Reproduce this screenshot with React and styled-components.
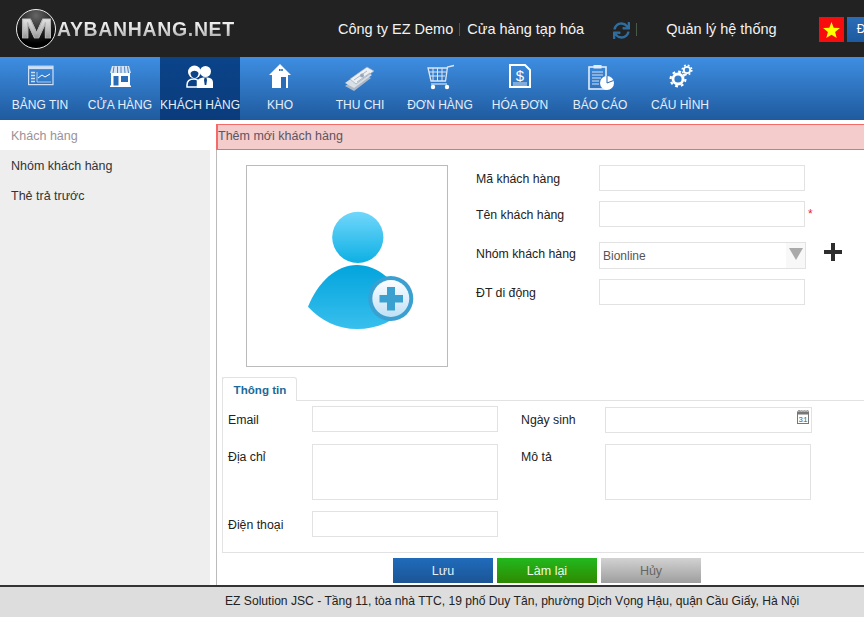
import React from 'react';
import styled, { createGlobalStyle } from 'styled-components';
import { FaSync } from 'react-icons/fa';

const Global = createGlobalStyle`
  html, body { margin: 0; padding: 0; overflow: hidden; background: #fff; }
  * { box-sizing: border-box; }
  body { font-family: "Liberation Sans", Arial, sans-serif; }
`;

const Page = styled.div`
  width: 864px; height: 617px; overflow: hidden;
  display: flex; flex-direction: column;
`;

const TopBar = styled.header`
  height: 57px; background: #222; flex: none;
  display: flex; align-items: center; color: #fff; white-space: nowrap;
`;
const Logo = styled.div`
  display: flex; align-items: center; margin-left: 16px; width: 322px; flex: none;
`;
const LogoBall = styled.div`
  width: 40px; height: 40px; border-radius: 50%; flex: none;
  border: 1.5px solid #eee;
  background: radial-gradient(circle at 50% 15%, #666 0%, #2a2a2a 40%, #000 75%);
  display: flex; align-items: center; justify-content: center; overflow: visible;
`;
const LogoM = styled.span`
  font-weight: bold; font-size: 28px; line-height: 30px; margin-left: 2px;
  transform: scaleX(1.42);
  -webkit-text-stroke: 0.7px #b4b4b4;
  background: linear-gradient(180deg, #f4f4f4 0%, #bbb 55%, #777 100%);
  -webkit-background-clip: text; background-clip: text; color: transparent;
`;
const LogoText = styled.span`
  font-weight: bold; font-size: 19.5px; letter-spacing: 0.65px; line-height: 24px; margin-left: 1px;
  background: linear-gradient(180deg, #fff 0%, #ddd 50%, #999 100%);
  -webkit-background-clip: text; background-clip: text; color: transparent;
`;
const TopLink = styled.span`
  font-size: 14.5px; color: #f2f2f2; margin-top: 1px;
  margin-left: ${p => p.$ml || 0}px;
`;
const TopDivider = styled.span`
  width: 1px; height: 13px; background: #4a5a4a; flex: none; margin-top: 1px;
  margin-left: ${p => p.$ml}px;
`;
const SyncIcon = styled(FaSync)`
  width: 17px; height: 19px; color: #2e6d9e; margin-left: 29px; margin-top: 4px; flex: none;
`;
const Flag = styled.div`
  width: 25px; height: 25px; background: #f70d0d; margin-left: 42px; flex: none;
  display: flex; align-items: center; justify-content: center; margin-top: 2px;
`;
const LangButton = styled.div`
  width: 60px; height: 25px; margin-left: 3px; flex: none; margin-top: 2px;
  background: linear-gradient(180deg, #2a6db8, #1d5a9f);
  font-size: 12px; line-height: 25px; padding-left: 10px; color: #fff;
`;

const Nav = styled.nav`
  height: 63px; flex: none; display: flex;
  background: linear-gradient(180deg, #3e8ee2 0%, #1f5a9e 100%);
`;
const NavItem = styled.div`
  width: 80px; flex: none; display: flex; flex-direction: column; align-items: center;
  padding-top: 5px; color: #e6eefa; font-size: 12px; white-space: nowrap;
  background: ${p => p.$active ? 'linear-gradient(180deg,#0b4389,#0a3c7c)' : 'transparent'};
  svg { display: block; width: 40px; height: 30px; flex: none; }
`;
const NavLabel = styled.span`
  line-height: 16px; margin-top: 5px;
`;

const Main = styled.main`
  flex: 1; display: flex; min-height: 0;
`;
const Sidebar = styled.aside`
  width: 210px; flex: none; background: #eee;
`;
const SideItem = styled.div`
  height: 30px; padding-left: 11px; font-size: 12.5px; line-height: 33px;
  color: ${p => p.$active ? '#9a929a' : '#333'};
  background: ${p => p.$active ? '#fff' : 'transparent'};
`;
const Content = styled.section`
  flex: none; width: 648px; margin-left: 6px; border-left: 1px solid #bbb; margin-top: 4px;
  display: flex; flex-direction: column;
`;
const TitleBar = styled.div`
  height: 26px; margin-left: -1px; background: #f4cccc; border: 1px solid #f26a6a; border-width: 1px 0 1px 2px;
  font-size: 12.5px; line-height: 23px; color: #5d5560; padding-left: 0; flex: none;
`;
const TopSection = styled.div`
  display: flex; padding: 15px 0 0 29px; flex: none;
`;
const Avatar = styled.div`
  width: 202px; height: 202px; border: 1px solid #bbb; flex: none;
  svg { display: block; }
`;
const Fields = styled.div`
  margin-left: 28px; display: grid; grid-template-columns: 123px 206px auto; align-content: start;
  grid-template-rows: 26px 26px 32px 26px; row-gap: 10px;
`;
const Label = styled.label`
  font-size: 12.3px; color: #222; line-height: 28px; height: 28px; white-space: nowrap;
  margin-left: ${p => p.$ml || 0}px;
  margin-top: ${p => p.$mt || 0}px;
`;
const SelectLabel = styled(Label)`
  align-self: end; margin-bottom: 1px;
`;
const TextBox = styled.input`
  display: block; width: 100%; height: 26px; border: 1px solid #e2e2e2; background: #fff; outline: none; padding: 0 4px;
`;
const Area = styled.div`
  width: ${p => p.$w || 186}px; height: 56px; border: 1px solid #e2e2e2; background: #fff;
  margin-left: ${p => p.$ml || 0}px;
`;
const Star = styled.span`
  color: #e8204a; font-size: 12px; line-height: 26px; margin-left: 3px;
`;
const Select = styled.div`
  width: 207px; height: 27px; border: 1px solid #e2e2e2; font-size: 12px; color: #555;
  display: flex; align-items: center; justify-content: space-between; padding-left: 3px;
  line-height: 26px; align-self: end;
`;
const SelectArrow = styled.span`
  width: 19px; height: 25px; background: #f8f8f8; display: flex; align-items: center; justify-content: center;
  &::after { content: ''; width: 0; height: 0; border-left: 7px solid transparent; border-right: 7px solid transparent; border-top: 12px solid #aaa; margin-top: -3px; }
`;
const AddButton = styled.svg`
  width: 18px; height: 18px; margin: 0 0 8px 19px; display: block; align-self: end;
`;

const TabPanel = styled.div`
  margin: 10px 0 0 5px; flex: none; height: 176px;
  border-left: 1px solid #e2e2e2; border-bottom: 1px solid #e2e2e2;
  display: flex; flex-direction: column;
`;
const TabRow = styled.div`
  height: 24px; flex: none; border-bottom: 1px solid #e2e2e2; margin-left: -1px;
`;
const Tab = styled.div`
  width: 75px; height: 24px; background: #fff; border: 1px solid #e2e2e2; border-bottom: none;
  border-radius: 3px 3px 0 0; font-size: 11.6px; font-weight: bold; color: #1a6a9a;
  text-align: center; line-height: 23px; padding-left: 1px;
`;
const TabGrid = styled.div`
  display: grid; padding: 5px 0 0 5px;
  grid-template-columns: 84px 186px 107px 206px;
  grid-template-rows: 38px 67px 26px;
`;
const DatePicker = styled.div`
  position: relative; margin-top: 1px; width: 207px; height: 26px;
`;
const CalIcon = styled.svg`
  position: absolute; right: 3px; top: 2px; width: 12px; height: 15px;
`;

const Actions = styled.div`
  display: flex; gap: 4px; padding: 5px 0 0 176px;
`;
const Btn = styled.button`
  width: 100px; height: 25px; border: none; padding: 0; font: 12.5px "Liberation Sans", Arial, sans-serif;
  color: ${p => p.$text};
  background: linear-gradient(180deg, ${p => p.$from}, ${p => p.$to});
`;

const Footer = styled.footer`
  height: 32px; flex: none; background: #ddd; border-top: 2px solid #333;
  font-size: 12.12px; color: #222; line-height: 29px; padding-left: 225px; white-space: nowrap;
`;

const W = '#fff';
const B = '#2b6cb8';

const icons = [
  <svg viewBox="0 0 40 30" key="1">
    <rect x="8.6" y="4.2" width="24.4" height="18.4" fill="none" stroke="#cfe0f5" strokeWidth="1.2" />
    <rect x="9" y="4.5" width="24" height="2.6" fill="#cfe0f5" />
    <path d="M11 10.5h4M11 13.5h4M11 16.5h4M11 19.5h4" stroke="#cfe0f5" strokeWidth="1.4" />
    <path d="M17 10v10h14" fill="none" stroke="#cfe0f5" strokeWidth=".8" />
    <path d="M18 16l4-3 3 2 5-3" fill="none" stroke="#fff" strokeWidth="1" />
  </svg>,
  <svg viewBox="0 0 40 30" key="2">
    <path d="M12 4h17l2 7H10z" fill="#d7e4f5" />
    <path d="M14 4.5l-1 6.5M17.500 4.500v6.500M21 4.500v6.500M24.500 4.500l.5 6.500M27.500 4.500l1 6.500" stroke="#4a83c2" strokeWidth="1" />
    <rect x="11" y="11" width="19" height="14" fill={W} />
    <rect x="13.500" y="14" width="5" height="11" fill={B} />
    <rect x="21" y="14" width="7" height="6" fill={B} />
    <rect x="10" y="23.500" width="21" height="1.500" fill={W} />
  </svg>,
  <svg viewBox="0 0 40 30" key="3">
    <circle cx="14.500" cy="10" r="6.500" fill={W} />
    <path d="M10.500 11c2-3 6-3 8 0 0 3-2 5-4 5s-4-2-4-5z" fill="#0c4488" />
    <path d="M7 25v-2c0-4 3-6 7-6 1.500 0 2.500.300 3.500 1v7z" fill="none" stroke={W} strokeWidth="1.500" />
    <circle cx="25.500" cy="9.500" r="5.500" fill={W} />
    <path d="M17 26v-5c0-4 3-5.500 8.500-5.500S33 17 33 21v5z" fill={W} />
    <path d="M24.500 16h2l.5 2-.7 5h-1.600l-.7-5z" fill="#0c4488" />
  </svg>,
  <svg viewBox="0 0 40 30" key="4">
    <path d="M20 2L31 13h-3v13H12V13H9z" fill={W} />
    <path d="M19 7h1.600v2H19zM21.200 7h1.600v2h-1.600z" fill={B} />
    <rect x="21" y="15" width="5" height="11" fill={B} />
  </svg>,
  <svg viewBox="0 0 40 30" key="5">
    <path d="M5 24L23 12l8 4-17 13z" fill="#aeb9c7" />
    <path d="M5 21L23 8l9 5-18 13z" fill="#d9dfe6" />
    <path d="M10 17L27 5l7 4-18 13z" fill="#eef1f4" stroke="#9aa8b8" strokeWidth=".7" />
    <path d="M14 18l13-9M17 20l13-9" stroke="#9aa8b8" strokeWidth=".8" />
    <circle cx="22" cy="13.500" r="2" fill="#9aa8b8" />
  </svg>,
  <svg viewBox="0 0 40 30" key="6">
    <path d="M34 3.500l-6.500 1.500-2 14H11L8 6h19" fill="none" stroke="#d9e6f6" strokeWidth="1.300" />
    <path d="M9 10h17M10 14h15M13 6v13M17.500 6v13M22 6v13" stroke="#d9e6f6" strokeWidth="1" />
    <path d="M11 22h16" stroke="#d9e6f6" strokeWidth="1.200" />
    <circle cx="13" cy="25" r="2.200" fill={W} />
    <circle cx="27" cy="25" r="2.200" fill={W} />
  </svg>,
  <svg viewBox="0 0 40 30" key="7">
    <path d="M10 3h15l5 5v17H10z" fill="none" stroke={W} strokeWidth="2" />
    <text x="20" y="18.500" textAnchor="middle" fontFamily="Liberation Sans" fontSize="15" fill={W}>$</text>
    <path d="M13 21h14M13 23h14" stroke="#cfe0f5" strokeWidth="1" />
  </svg>,
  <svg viewBox="0 0 40 30" key="8">
    <rect x="9" y="5" width="17" height="22" fill="none" stroke="#e3edf9" strokeWidth="1.600" />
    <rect x="13.500" y="3" width="8" height="3.500" fill="#e3edf9" />
    <path d="M12 10h11M12 13h11M12 16h9M12 19h7M12 22h7" stroke="#d5e3f4" strokeWidth="1" />
    <circle cx="27" cy="21" r="7" fill={W} />
    <path d="M27 21V14M27 21l6.500 -2.500" stroke="#2b66ad" strokeWidth="1" />
  </svg>,
  <svg viewBox="0 0 40 30" key="9">
    <circle cx="18" cy="17" r="5" fill="none" stroke={W} strokeWidth="2.800" />
    <circle cx="18" cy="17" r="7.400" fill="none" stroke={W} strokeWidth="2.200" strokeDasharray="2.800 3" />
    <circle cx="27" cy="8" r="3.200" fill="none" stroke={W} strokeWidth="1.800" />
    <circle cx="27" cy="8" r="4.800" fill="none" stroke={W} strokeWidth="1.500" strokeDasharray="1.800 2" />
  </svg>,
];
const navLabels = ['BẢNG TIN', 'CỬA HÀNG', 'KHÁCH HÀNG', 'KHO', 'THU CHI', 'ĐƠN HÀNG', 'HÓA ĐƠN', 'BÁO CÁO', 'CẤU HÌNH'];

const AvatarArt = () => (
  <svg width="200" height="200" viewBox="247 166 200 200">
    <defs>
      <linearGradient id="head" x1="0" y1="0" x2="0" y2="1"><stop offset="0" stopColor="#72d7fb" /><stop offset="1" stopColor="#0db0e4" /></linearGradient>
      <linearGradient id="body" x1="0" y1="0" x2="0" y2="1"><stop offset="0" stopColor="#02a4dd" /><stop offset="1" stopColor="#38bfed" /></linearGradient>
      <linearGradient id="disc" x1="0" y1="0" x2="0" y2="1"><stop offset="0" stopColor="#fdfeff" /><stop offset="1" stopColor="#bfe0f5" /></linearGradient>
    </defs>
    <circle cx="357.800" cy="237.300" r="25.600" fill="url(#head)" />
    <path d="M308 306.700C318 282 336 265 357 265c20 0 38 15 52 41-14 15-32 23-52 23-19 0-36-8-49-22.300z" fill="url(#body)" />
    <circle cx="390.800" cy="298.500" r="22.500" fill="#3aa0d2" />
    <circle cx="390.800" cy="298.500" r="18.500" fill="url(#disc)" />
    <path d="M387 287h8v8h8v7.500h-8v8h-8v-8h-7.500V295h7.500z" fill="#3aa0d0" />
  </svg>
);

export default function App() {
  return (
    <Page>
      <Global />
      <TopBar>
        <Logo>
          <LogoBall><LogoM>M</LogoM></LogoBall>
          <LogoText>AYBANHANG.NET</LogoText>
        </Logo>
        <TopLink>Công ty EZ Demo</TopLink>
        <TopDivider $ml={6} />
        <TopLink $ml={7}>Cửa hàng tạp hóa</TopLink>
        <SyncIcon />
        <TopDivider $ml={6} />
        <TopLink $ml={29}>Quản lý hệ thống</TopLink>
        <Flag>
          <svg width="17" height="16" viewBox="0 0 20 19"><path d="M10 0l2.600 6.800 7.400.400-5.700 4.600 1.900 7.200L10 15l-6.200 4 1.900-7.200L0 7.200l7.400-.400z" fill="#ff0" /></svg>
        </Flag>
        <LangButton>Đ</LangButton>
      </TopBar>
      <Nav>
        {navLabels.map((t, i) => (
          <NavItem key={t} $active={i === 2}>
            {icons[i]}
            <NavLabel>{t}</NavLabel>
          </NavItem>
        ))}
      </Nav>
      <Main>
        <Sidebar>
          <SideItem $active>Khách hàng</SideItem>
          <SideItem>Nhóm khách hàng</SideItem>
          <SideItem>Thẻ trả trước</SideItem>
        </Sidebar>
        <Content>
          <TitleBar>Thêm mới khách hàng</TitleBar>
          <TopSection>
            <Avatar><AvatarArt /></Avatar>
            <Fields>
              <Label>Mã khách hàng</Label><TextBox /><span />
              <Label>Tên khách hàng</Label><TextBox /><Star>*</Star>
              <SelectLabel>Nhóm khách hàng</SelectLabel>
              <Select>Bionline<SelectArrow /></Select>
              <AddButton viewBox="0 0 18 18"><path d="M7 0h4v7h7v4h-7v7H7v-7H0V7h7z" fill="#2d2d2d" /></AddButton>
              <Label>ĐT di động</Label><TextBox /><span />
            </Fields>
          </TopSection>
          <TabPanel>
            <TabRow><Tab>Thông tin</Tab></TabRow>
            <TabGrid>
              <Label>Email</Label><TextBox />
              <Label $ml={23}>Ngày sinh</Label>
              <DatePicker>
                <TextBox />
                <CalIcon viewBox="0 0 12 15">
                  <path d="M1 2.500l1-1.500 1 1.500 1.500-1.500 1.500 1.500 1.500-1.500 1.500 1.500 1.500-1.500 1 1.500" fill="none" stroke="#777" strokeWidth=".8" />
                  <rect x=".5" y="3" width="11" height="11.500" fill="#fff" stroke="#777" />
                  <rect x=".5" y="3" width="11" height="2.500" fill="#777" />
                  <text x="6" y="12.500" textAnchor="middle" fontSize="7.500" fontFamily="Liberation Mono" fill="#555">31</text>
                </CalIcon>
              </DatePicker>
              <Label $mt={-1}>Địa chỉ</Label><Area />
              <Label $mt={-1} $ml={23}>Mô tả</Label>
              <Area $w={206} />
              <Label>Điện thoại</Label><TextBox />
            </TabGrid>
          </TabPanel>
          <Actions>
            <Btn $from="#206bbb" $to="#1b5595" $text="#e8f0fa">Lưu</Btn>
            <Btn $from="#22b81e" $to="#2f8a00" $text="#eefbe8">Làm lại</Btn>
            <Btn $from="#d2d2d2" $to="#9e9e9e" $text="#666">Hủy</Btn>
          </Actions>
        </Content>
      </Main>
      <Footer>EZ Solution JSC - Tầng 11, tòa nhà TTC, 19 phố Duy Tân, phường Dịch Vọng Hậu, quận Cầu Giấy, Hà Nội</Footer>
    </Page>
  );
}
